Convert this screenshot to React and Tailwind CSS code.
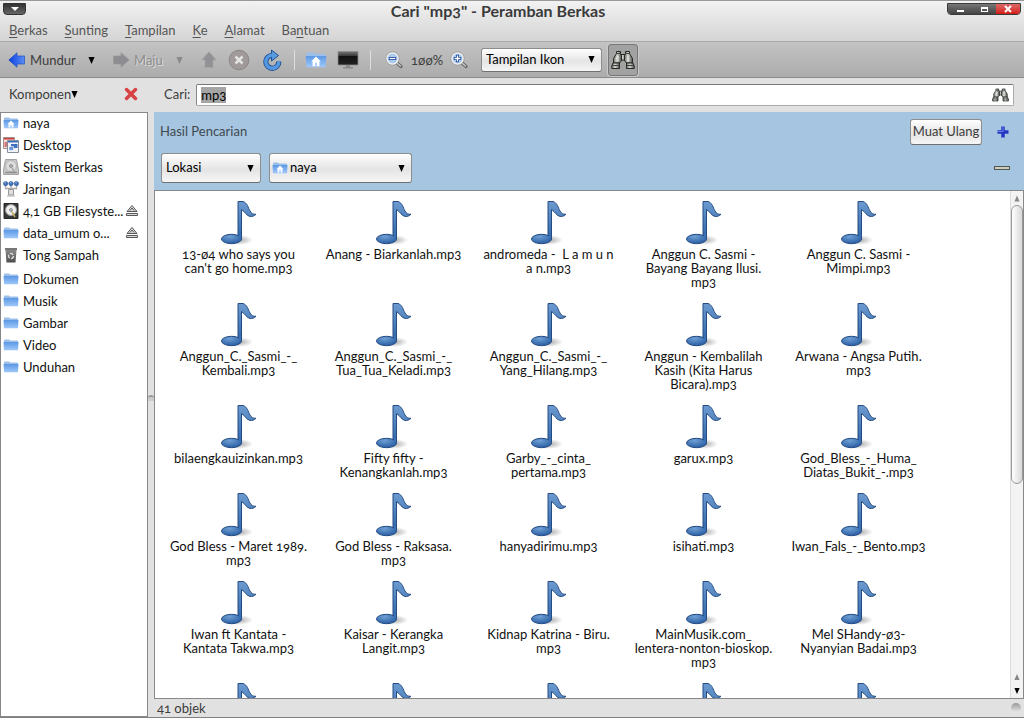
import { useEffect, useRef } from "react";

const FILES = [
  ["13-ø4 who says you", "can't go home.mp3"],
  ["Anang - Biarkanlah.mp3"],
  ["andromeda -  L a m u n", "a n.mp3"],
  ["Anggun C. Sasmi -", "Bayang Bayang Ilusi.", "mp3"],
  ["Anggun C. Sasmi -", "Mimpi.mp3"],
  ["Anggun_C._Sasmi_-_", "Kembali.mp3"],
  ["Anggun_C._Sasmi_-_", "Tua_Tua_Keladi.mp3"],
  ["Anggun_C._Sasmi_-_", "Yang_Hilang.mp3"],
  ["Anggun - Kembalilah", "Kasih (Kita Harus", "Bicara).mp3"],
  ["Arwana - Angsa Putih.", "mp3"],
  ["bilaengkauizinkan.mp3"],
  ["Fifty fifty -", "Kenangkanlah.mp3"],
  ["Garby_-_cinta_", "pertama.mp3"],
  ["garux.mp3"],
  ["God_Bless_-_Huma_", "Diatas_Bukit_-.mp3"],
  ["God Bless - Maret 1989.", "mp3"],
  ["God Bless - Raksasa.", "mp3"],
  ["hanyadirimu.mp3"],
  ["isihati.mp3"],
  ["Iwan_Fals_-_Bento.mp3"],
  ["Iwan ft Kantata -", "Kantata Takwa.mp3"],
  ["Kaisar - Kerangka", "Langit.mp3"],
  ["Kidnap Katrina - Biru.", "mp3"],
  ["MainMusik.com_", "lentera-nonton-bioskop.", "mp3"],
  ["Mel SHandy-ø3-", "Nyanyian Badai.mp3"],
  [], [], [], [], [],
];

function Gradients() {
  return (
    <svg width="0" height="0" className="absolute" aria-hidden="true">
      <defs>
        <linearGradient id="note" x1="0" y1="0" x2="0" y2="1">
          <stop offset="0" stopColor="#6d9bd0" /><stop offset="1" stopColor="#2f65a8" />
        </linearGradient>
        <radialGradient id="head" cx=".4" cy=".25" r=".7">
          <stop offset="0" stopColor="#6f9fd4" /><stop offset="1" stopColor="#2d62a6" />
        </radialGradient>
        <radialGradient id="shade">
          <stop offset="0" stopColor="#000" stopOpacity=".34" /><stop offset="1" stopColor="#000" stopOpacity="0" />
        </radialGradient>
        <linearGradient id="folder" x1="0" y1="0" x2="0" y2="1">
          <stop offset="0" stopColor="#5c98e4" /><stop offset="1" stopColor="#9fc8fa" />
        </linearGradient>
        <linearGradient id="metal" x1="0" y1="0" x2="1" y2="0">
          <stop offset="0" stopColor="#72766f" /><stop offset=".45" stopColor="#d3d6cf" /><stop offset="1" stopColor="#50544f" />
        </linearGradient>
        <linearGradient id="blue" x1="0" y1="0" x2="1" y2="0">
          <stop offset="0" stopColor="#0b3fe0" /><stop offset="1" stopColor="#5c8ef5" />
        </linearGradient>
        <linearGradient id="screen" x1="0" y1="0" x2="0" y2="1">
          <stop offset="0" stopColor="#777" /><stop offset=".35" stopColor="#333" /><stop offset=".36" stopColor="#111" /><stop offset="1" stopColor="#222" />
        </linearGradient>
        <linearGradient id="bin" x1="0" y1="0" x2="0" y2="1">
          <stop offset="0" stopColor="#8c8c8c" /><stop offset="1" stopColor="#4b4b4b" />
        </linearGradient>
      </defs>
    </svg>
  );
}

function Note() {
  return (
    <svg viewBox="0 0 48 48" className="-mb-px size-12 shrink-0" aria-hidden="true">
      <ellipse cx="24" cy="40" rx="14" ry="5" fill="url(#shade)" />
      <path d="M23 1.500h5c4.500 1.500 5 6 7 9.500 1.500 2.500 3 3.500 6 3.300-2 1.900-4 2.400-6 2.100-3.500-.5-4.500-4.400-8.500-6.900V39H23z" fill="url(#note)" stroke="#244c84" strokeLinejoin="round" />
      <ellipse cx="16.500" cy="39" rx="10" ry="4.700" fill="url(#head)" stroke="#244c84" />
      <path d="M24 34h2v5h-2z" fill="#3b70b2" />
    </svg>
  );
}

function Folder({ home, className = "size-4" }) {
  return (
    <svg viewBox="0 0 16 16" className={className} aria-hidden="true">
      <path d="M1 3.500q0-1 1-1h4l1 1h7q1 0 1 1V9H1z" fill="#9bbfe9" />
      <path d="M.5 5h15l-.5 8.200H1z" fill="url(#folder)" />
      {home && <path d="M8 5.500 4.500 9h1v3.500h2V10h1v2.500h2V9h1z" fill="#fff" />}
    </svg>
  );
}

function Binoculars({ className }) {
  return (
    <svg viewBox="0 0 24 20" className={className} aria-hidden="true">
      <g stroke="#252825" fill="url(#metal)" strokeLinejoin="round">
        <path d="M9.500 4.500h5v5.500h-5z" />
        <path d="M5.500 3.500V1.500h4v2l1 2.500v5L8 13H2.500V8.500z" />
        <path d="M18.500 3.500V1.500h-4v2l-1 2.500v5l2.500 2h5.500V8.500z" />
        <path d="M2 13h6.500v5.500H.800V16z" />
        <path d="M22 13h-6.500v5.500h7.700V16z" />
      </g>
      <path d="M5.500 3.500h4M14.500 3.500h4M1.500 15.500h7M15.500 15.500h7" stroke="#3d413c" />
      <path d="M5 9.500 7 6v5M17 6v5l-1-1" stroke="#eceee9" fill="none" strokeWidth=".8" />
    </svg>
  );
}

function Arrow({ className = "size-2", up }) {
  return (
    <svg viewBox="0 0 8 8" className={className} fill="currentColor" aria-hidden="true">
      <path d={up ? "M4 0 7.500 8h-7z" : "M.5 0h7L4 8z"} />
    </svg>
  );
}

function BigArrow({ fill, stroke, className }) {
  return (
    <svg viewBox="0 0 18 16" className={className} aria-hidden="true">
      <path d="M.8 8 9 .8V4h7.500v8H9v3.200z" fill={fill} stroke={stroke} strokeWidth=".7" />
    </svg>
  );
}

function Zoom({ plus }) {
  return (
    <svg viewBox="0 0 18 18" className="size-[18px]" aria-hidden="true">
      <path d="m11.500 11.500 4.500 4" stroke="#666" strokeWidth="3.200" strokeLinecap="round" />
      <path d="m12 12 3.500 3" stroke="#ccc" strokeWidth="1.300" strokeLinecap="round" />
      <circle cx="7.500" cy="7.500" r="5.800" fill="#a9c9ee" stroke="#eee" strokeWidth="2" />
      <circle cx="7.500" cy="7.500" r="6.700" fill="none" stroke="#8b8b8b" strokeWidth=".7" />
      <path d={plus ? "M7.500 3.800v7.400M3.800 7.500h7.400" : "M3.800 7.500h7.400"} stroke="#214b9b" strokeWidth="3" />
      <path d={plus ? "M7.500 4.600v5.800M4.600 7.500h5.800" : "M4.600 7.500h5.800"} stroke="#fff" strokeWidth="1.300" />
    </svg>
  );
}

function Monitor() {
  return (
    <svg viewBox="0 0 22 20" className="h-5 w-[22px]" aria-hidden="true">
      <path d="M9 14h4v3h3v1.500H6V17h3z" fill="#888" />
      <path d="M1 1.500h20V15H1z" fill="url(#screen)" stroke="#8a8a8a" strokeWidth=".8" />
    </svg>
  );
}

function Reload() {
  return (
    <svg viewBox="0 0 20 22" className="h-[22px] w-5" aria-hidden="true">
      <path d="M10.500 6.300A6.500 6.500 0 1 0 16.800 12.500" fill="none" stroke="#1d4f93" strokeWidth="5.200" />
      <path d="m9.500 1 7 5.500-7 5.500z" fill="#5b9be0" stroke="#1d4f93" />
      <path d="M10.500 6.300A6.500 6.500 0 1 0 16.800 12.500" fill="none" stroke="#5598e2" strokeWidth="3.400" />
    </svg>
  );
}

function Screenshots() {
  return (
    <svg viewBox="0 0 16 16" className="size-4" aria-hidden="true">
      <path d="M.5.500h11v11H.500z" fill="#efe0de" stroke="#a98f8f" />
      <path d="M1 1h10v1.500H1z" fill="#c9403a" />
      <path d="M1.500 5h4v5h-4z" fill="#cf7770" />
      <path d="M4.500 3.500h11v12h-11z" fill="#f2f4f8" stroke="#858d9d" />
      <path d="M5 4h10v1.500H5z" fill="#3e6fc0" />
      <path d="M8 7h6.500v4H8z" fill="#3e6fc0" /><path d="M6 9.500h4.500v4H6z" fill="#6b94d6" stroke="#fff" strokeWidth=".6" />
    </svg>
  );
}

function Disk({ dark }) {
  return (
    <svg viewBox="0 0 16 16" className="size-4" aria-hidden="true">
      <path d={dark ? "M1 .500h14v15H1z" : "M2.500.500h11L15.500 11v4.500H.500V11z"} fill={dark ? "#35383a" : "#c9c9c9"} stroke={dark ? "#292929" : "#a3a3a3"} />
      <circle cx="8" cy="7" r="5.500" fill={dark ? "#eee" : "#dcdcdc"} stroke={dark ? "#999" : "#b5b5b5"} />
      <circle cx="8" cy="7" r="1.500" fill="#bbb" stroke="#777" strokeWidth=".7" />
      <path d="M12 14 9 9" stroke={dark ? "#c5a858" : "#aaa"} strokeWidth="1.500" />
      {!dark && <path d="M2 13.500h12" stroke="#8f8f8f" strokeWidth="1.500" />}
    </svg>
  );
}

function Network() {
  return (
    <svg viewBox="0 0 16 16" className="size-4" aria-hidden="true">
      <path d="M2.500 4v3.500h11V4M8 4v5" fill="none" stroke="#aaa" strokeWidth="1.300" />
      <g fill="#3d6fb7" stroke="#24518f" strokeWidth=".5">
        <circle cx="2.600" cy="2.600" r="2.200" /><circle cx="8" cy="2.600" r="2.200" /><circle cx="13.400" cy="2.600" r="2.200" />
      </g>
      <path d="M1.500 1.800h1.500M7 1.800h1.500M12.400 1.800h1.500" stroke="#a9c7ee" />
      <path d="M5.500 8.500h5V14h-5z" fill="#ddd" stroke="#999" /><path d="M4 15h8" stroke="#aaa" />
    </svg>
  );
}

function Trash() {
  return (
    <svg viewBox="0 0 16 16" className="size-4" aria-hidden="true">
      <path d="M2.500 3h11l-1 12.500h-9z" fill="url(#bin)" /><path d="M2 1h12v2.200H2z" fill="#777" />
      <circle cx="8" cy="9" r="2.500" fill="none" stroke="#ddd" strokeWidth="1.300" strokeDasharray="3.700 1.500" />
    </svg>
  );
}

function Eject() {
  return (
    <svg viewBox="0 0 14 14" className="size-3.5" fill="#ddd" stroke="#555" aria-hidden="true">
      <path d="m7 1.500 5 6H2z" /><path d="M1.500 9.500h11v2h-11z" /><path d="m5 6.500 2-2.500 2 2.500" fill="none" />
    </svg>
  );
}

const PLACES = [
  ["naya", <Folder home />],
  ["Desktop", <Screenshots />],
  ["Sistem Berkas", <Disk />],
  ["Jaringan", <Network />],
  ["4,1 GB Filesyste...", <Disk dark />, true],
  ["data_umum o...", <Folder />, true],
  ["Tong Sampah", <Trash />],
];
const BOOKMARKS = ["Dokumen", "Musik", "Gambar", "Video", "Unduhan"];
const MENUS = [["", "B", "erkas"], ["", "S", "unting"], ["", "T", "ampilan"], ["", "K", "e"], ["", "A", "lamat"], ["Ba", "n", "tuan"]];

const BUTTON = "rounded-[3px] border border-[#8d8d8d] border-b-[#707070] bg-linear-to-b from-white via-[#e4e4e4] via-55% to-[#f6f6f6] pb-0.5";

function Combo({ label, value, className, height, icon }) {
  return (
    <div className={`relative flex items-center ${className}`}>
      {icon && <Folder home className="pointer-events-none absolute left-[3px] size-4" />}
      <select aria-label={label} className={`w-full appearance-none text-black outline-none ${BUTTON} ${height} ${icon ? "pl-5" : "pl-1"}`}>
        <option>{value}</option>
      </select>
      <Arrow className="pointer-events-none absolute right-[7px] size-[7px] text-black" />
    </div>
  );
}

function Place({ name, icon, eject }) {
  return (
    <li className="flex h-[22px] items-center pr-2 pb-0.5 pl-[2px]">
      <a href="#" className="flex min-w-0 flex-1 items-center gap-1 whitespace-nowrap">
        {icon}
        {name}
      </a>
      {eject && <button aria-label={`Lepas ${name}`}><Eject /></button>}
    </li>
  );
}

export default function App() {
  const search = useRef(null);
  useEffect(() => {
    search.current.focus();
    search.current.select();
  }, []);

  return (
    <div className="flex h-screen flex-col overflow-hidden border-t border-b border-t-[#999] border-b-[#808080] bg-[#e1e1e1] font-['Lato','Noto_Sans',sans-serif] text-[13px] leading-4 text-[#3c3c3c] [font-variant-numeric:oldstyle-nums]">
      <Gradients />
      <header className="border-b border-[#aaa] bg-linear-to-b from-[#f2f2f2] to-[#d4d4d4]">
        <div className="grid h-[19px] grid-cols-[1fr_auto_1fr] items-start">
          <button aria-label="Menu jendela" className="mt-[2px] ml-[3px] flex h-3 w-[23px] items-center justify-center rounded-b border border-[#333] bg-linear-to-b from-[#333] to-[#666] text-white">
            <svg viewBox="0 0 8 4" className="h-1 w-2" fill="currentColor"><path d="M0 0h8L4 4z" /></svg>
          </button>
          <h1 className="pr-7 text-base leading-5 font-bold text-[#3a3a3a]">Cari "mp3" - Peramban Berkas</h1>
          <div className="mt-[2px] mr-[3px] flex h-3 justify-self-end overflow-hidden rounded-b border border-[#3a3a3a]">
            <button aria-label="Perkecil" className="flex w-6 items-end justify-center bg-linear-to-b from-[#777] to-[#444] pb-[2px]"><span className="h-[2px] w-[7px] bg-white" /></button>
            <button aria-label="Perbesar" className="flex w-6 items-center justify-center bg-linear-to-b from-[#777] to-[#444]"><span className="h-[5px] w-[7px] border border-t-2 border-white" /></button>
            <button aria-label="Tutup" className="flex w-6 items-center justify-center bg-linear-to-b from-[#d66] to-[#d31414]">
              <svg viewBox="0 0 8 8" className="size-2"><path d="m1 1 6 6M7 1 1 7" stroke="#fff" strokeWidth="2" /></svg>
            </button>
          </div>
        </div>
        <nav className="flex h-[21px] items-center gap-[17px] pb-0.5 pl-[9px] text-[#555]">
          {MENUS.map(([a, b, c]) => (
            <button key={b}>{a}<u className="underline-offset-2">{b}</u>{c}</button>
          ))}
        </nav>
      </header>

      <div className="flex h-9 shrink-0 items-center border-b border-[#8b8b8b] bg-linear-to-b from-[#c3c3c3] to-[#acacac] pl-2">
        <button className="flex w-20 items-center gap-1"><BigArrow fill="url(#blue)" stroke="#214fc0" className="h-4 w-[18px]" />Mundur</button>
        <button aria-label="Riwayat mundur" className="w-6 pt-0.5 text-black"><Arrow className="size-[7px]" /></button>
        <button disabled className="flex w-16 items-center gap-1 text-[#8d8d8d] [text-shadow:1px_1px_#ddd]"><BigArrow fill="#8d8d91" stroke="#999" className="h-4 w-[18px] rotate-180" />Maju</button>
        <button disabled aria-label="Riwayat maju" className="w-6 pt-0.5 text-[#888]"><Arrow className="size-[7px]" /></button>
        <button disabled aria-label="Naik" className="w-7"><BigArrow fill="#929296" stroke="#a5a5a5" className="h-4 w-[18px] rotate-90" /></button>
        <button disabled aria-label="Berhenti" className="w-[34px]">
          <svg viewBox="0 0 22 22" className="size-[22px]"><circle cx="11" cy="11" r="9.800" fill="#a09a9a" stroke="#8c8686" /><path d="m7.500 7.500 7 7m0-7-7 7" stroke="#e3e3e3" strokeWidth="2.500" /></svg>
        </button>
        <button aria-label="Muat ulang halaman" className="w-8"><Reload /></button>
        <span className="h-5 w-[11px] border-l border-[#ddd]" />
        <button aria-label="Rumah" className="w-8"><Folder home className="size-[22px]" /></button>
        <button aria-label="Komputer" className="w-[33px]"><Monitor /></button>
        <span className="h-5 w-[15px] border-l border-[#ddd]" />
        <button aria-label="Perkecil tampilan" className="w-[26px]"><Zoom /></button>
        <span className="w-[39px]">1øø%</span>
        <button aria-label="Perbesar tampilan" className="w-[31px]"><Zoom plus /></button>
        <Combo label="Mode tampilan" value="Tampilan Ikon" className="w-[121px]" height="h-6" />
        <button aria-label="Cari" aria-pressed="true" className="ml-1.5 flex h-8 w-[30px] items-center justify-center rounded-[3px] border border-[#777] bg-[#a2a2a2] shadow-[0_0_0_1px_#c9c9c9]"><Binoculars className="h-5 w-6" /></button>
      </div>

      <div className="flex min-h-0 flex-1">
        <aside className="flex w-[148px] shrink-0 flex-col">
          <div className="flex h-[34px] items-center justify-between pr-[9px] pb-0.5 pl-[9px]">
            <button className="flex items-center">Komponen<Arrow className="size-[7px] text-black" /></button>
            <button aria-label="Tutup panel">
              <svg viewBox="0 0 16 16" className="size-4"><path d="m3.500 3.500 9 9M12.500 3.500l-9 9" stroke="#d94242" strokeWidth="3.500" strokeLinecap="round" /></svg>
            </button>
          </div>
          <div className="flex-1 border border-[#888] bg-white text-[#111]">
            <ul>{PLACES.map(([name, icon, eject]) => <Place key={name} name={name} icon={icon} eject={eject} />)}</ul>
            <ul className="pt-[2px]">{BOOKMARKS.map((name) => <Place key={name} name={name} icon={<Folder />} />)}</ul>
          </div>
        </aside>

        <div className="flex w-[6px] shrink-0 items-center">
          <span className="h-1.5 w-full rounded-t-full border-t-2 border-[#999] bg-[#ccc]" />
        </div>

        <main className="flex min-w-0 flex-1 flex-col">
          <div className="flex h-[34px] shrink-0 items-center gap-1.5 pr-[10px] pl-2.5">
            <label htmlFor="search" className="pb-0.5">Cari:</label>
            <div className="flex h-[22px] flex-1 items-center rounded-[2px] border border-[#aaa] border-t-[#777] border-l-[#888] bg-white pr-1 pl-1">
              <input id="search" ref={search} defaultValue="mp3" className="min-w-0 flex-1 bg-transparent text-black outline-none selection:bg-[#a5a5a5] selection:text-black" />
              <button aria-label="Mulai cari"><Binoculars className="h-4 w-[17px]" /></button>
            </div>
          </div>
          <section className="flex h-[78px] shrink-0 flex-col gap-2 bg-[#a6c5e0] pt-[7px] pr-[14px] pl-1.5">
            <div className="flex items-center">
              <h2 className="flex-1 pb-0.5 text-[#40494f]">Hasil Pencarian</h2>
              <button className={`h-[26px] w-[72px] whitespace-nowrap ${BUTTON}`}>Muat Ulang</button>
              <button aria-label="Tambah kriteria" className="ml-3.5 flex w-3.5 justify-center">
                <svg viewBox="0 0 12 12" className="size-3"><path d="M6 .500v11M.500 6h11" stroke="#2438c4" strokeWidth="3.500" /><path d="M1 5.500h5V1" stroke="#6a83e8" fill="none" /></svg>
              </button>
            </div>
            <div className="flex items-center gap-2 pl-px">
              <Combo label="Kriteria" value="Lokasi" className="w-[100px]" height="h-[30px]" />
              <Combo label="Folder" value="naya" className="w-[143px]" height="h-[30px]" icon />
              <button aria-label="Hapus kriteria" className="ml-auto h-1 w-4 border border-[#55564f] bg-[#cccec4]" />
            </div>
          </section>

          <div className="flex min-h-0 flex-1 border border-[#888] bg-white">
            <ul className="grid min-w-0 flex-1 grid-cols-[repeat(auto-fill,155px)] content-start gap-y-[13px] overflow-hidden pt-[9px] pl-1.5 leading-[14px] text-[#111]">
              {FILES.map((lines, i) => (
                <li key={i} className="flex flex-col items-center">
                  <Note />
                  {lines.map((line) => <span key={line} className="whitespace-pre">{line}</span>)}
                </li>
              ))}
            </ul>
            <div className="flex w-[13px] shrink-0 flex-col items-center border-l border-[#ddd] bg-[#f3f3f3]" role="presentation">
              <span className="flex h-3.5 items-center text-[#888]"><Arrow up className="h-[7px] w-1.5" /></span>
              <span className="h-[55%] w-full rounded-md border border-[#999] bg-linear-to-r from-white to-[#d8d8d8]" />
              <span className="mt-auto flex h-3.5 items-center text-[#888]"><Arrow up className="h-[6px] w-1.5" /></span>
              <span className="flex h-3.5 items-center text-black"><Arrow className="h-[6px] w-1.5" /></span>
            </div>
          </div>
          <footer className="flex h-[18px] shrink-0 items-center justify-between pr-[3px] pl-[3px]">
            41 objek
            <span className="size-2.5 rounded-full bg-linear-to-b from-[#999] to-[#eee]" />
          </footer>
        </main>
      </div>
    </div>
  );
}
